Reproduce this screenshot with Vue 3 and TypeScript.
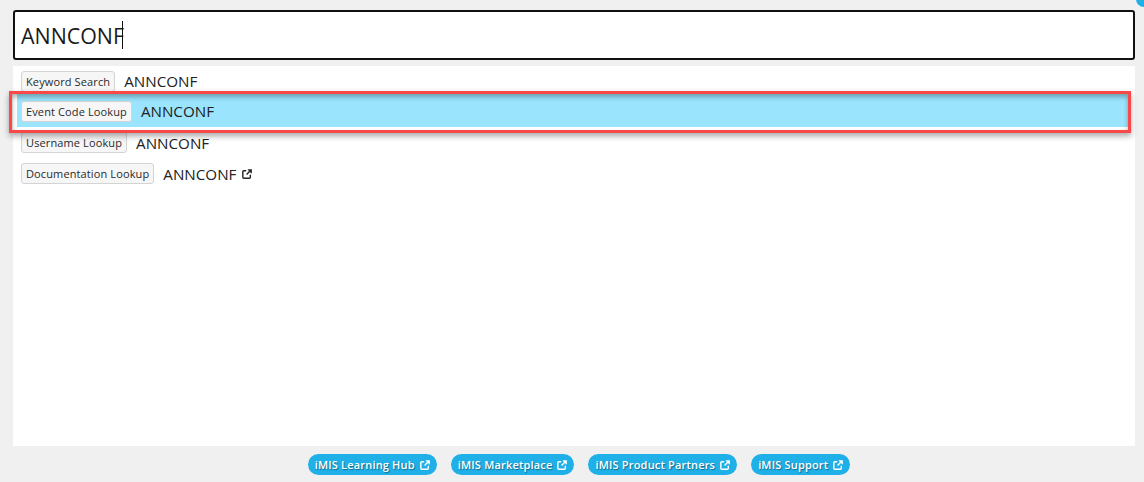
<script setup lang="ts">
const rows = [
  { tag: 'Keyword Search', text: 'ANNCONF', ext: false, active: false },
  { tag: 'Event Code Lookup', text: 'ANNCONF', ext: false, active: true },
  { tag: 'Username Lookup', text: 'ANNCONF', ext: false, active: false },
  { tag: 'Documentation Lookup', text: 'ANNCONF', ext: true, active: false },
]
const links = ['iMIS Learning Hub', 'iMIS Marketplace', 'iMIS Product Partners', 'iMIS Support']
</script>

<template>
  <div class="page">
    <span class="corner"></span>
    <div class="search"><span class="query">ANNCONF</span><span class="caret"></span></div>
    <div class="panel">
      <div v-for="r in rows" :key="r.tag" class="row" :class="{ active: r.active }">
        <span class="tag">{{ r.tag }}</span>
        <span class="value">{{ r.text }}</span>
        <svg v-if="r.ext" class="ext dark" viewBox="0 0 12 12" width="10" height="10">
          <path d="M5 2H2.200C1.500 2 1 2.500 1 3.200v6.600C1 10.500 1.500 11 2.200 11h6.600c.7 0 1.200-.5 1.200-1.200V7" />
          <path d="M7 1h4v4M11 1 5.500 6.500" />
        </svg>
      </div>
      <div class="callout"></div>
    </div>
    <div class="links">
      <a v-for="l in links" :key="l" class="pill">
        {{ l }}
        <svg class="ext" viewBox="0 0 12 12" width="10" height="10">
          <path d="M5 2H2.200C1.500 2 1 2.500 1 3.200v6.600C1 10.500 1.500 11 2.200 11h6.600c.7 0 1.200-.5 1.200-1.200V7" />
          <path d="M7 1h4v4M11 1 5.500 6.500" />
        </svg>
      </a>
    </div>
  </div>
</template>

<style>
html, body { margin: 0; background: #f0f0f0; }
</style>

<style scoped>
.page {
  position: relative;
  width: 1144px;
  height: 482px;
  box-sizing: border-box;
  padding: 10px 9px 0 13px;
  background: #f0f0f0;
  font-family: "Open Sans", "Noto Sans", sans-serif;
  color: #222;
  overflow: hidden;
}
.corner {
  position: absolute;
  right: -8px;
  top: -9px;
  width: 16px;
  height: 16px;
  border-radius: 50%;
  background: #1fb0e8;
}
.search {
  box-sizing: border-box;
  height: 50px;
  border: 2px solid #111;
  border-radius: 3px;
  background: #fff;
  display: flex;
  align-items: center;
  padding-left: 6px;
}
.query {
  font-size: 21.400px;
  color: #1a1a1a;
}
.caret {
  width: 1px;
  height: 28px;
  margin-left: -2px;
  background: #111;
}
.panel {
  position: relative;
  box-sizing: border-box;
  height: 380px;
  margin-top: 6px;
  background: #fff;
  padding-top: 2px;
}
.row {
  display: flex;
  align-items: center;
  height: 31px;
  padding-left: 8px;
}
.row:first-child { height: 26px; }
.row.active {
  box-sizing: border-box;
  background: #9ae4fd;
  margin: 0 7px 0 4px;
  padding: 1px 0 0 4px;
  height: 33px;
}
.tag {
  box-sizing: border-box;
  height: 21px;
  line-height: 19px;
  padding: 0 4px;
  border: 1px solid #d4d4d4;
  border-radius: 3px;
  background: #f6f6f6;
  font-size: 11px;
  letter-spacing: 0.12px;
  color: #2a2a2a;
  white-space: nowrap;
}
.value {
  margin-left: 9px;
  font-size: 15.200px;
  color: #222;
}
.ext {
  fill: none;
  stroke: #fff;
  stroke-width: 1.700;
  margin-left: 3px;
  flex: none;
}
.ext.dark {
  stroke: #222;
  margin-left: 6px;
}
.callout {
  position: absolute;
  left: -4px;
  top: 25px;
  width: 1122px;
  height: 42px;
  box-sizing: border-box;
  border: 3px solid #f84848;
  box-shadow: 0 3px 6px rgba(0, 0, 0, 0.35), inset 0 3px 5px rgba(0, 0, 0, 0.3);
  pointer-events: none;
}
.links {
  display: flex;
  justify-content: center;
  gap: 14px;
  margin: 8px 0 0 10px;
}
.pill {
  display: inline-flex;
  align-items: center;
  height: 21px;
  padding: 0 7px;
  border-radius: 11px;
  background: #1fb0e8;
  color: #fff;
  font-size: 11px;
  font-weight: 600;
  letter-spacing: 0.18px;
  text-shadow: 1px 1px 1px rgba(0, 0, 0, 0.4);
  white-space: nowrap;
}
.pill .ext { margin-left: 5px; }
</style>
